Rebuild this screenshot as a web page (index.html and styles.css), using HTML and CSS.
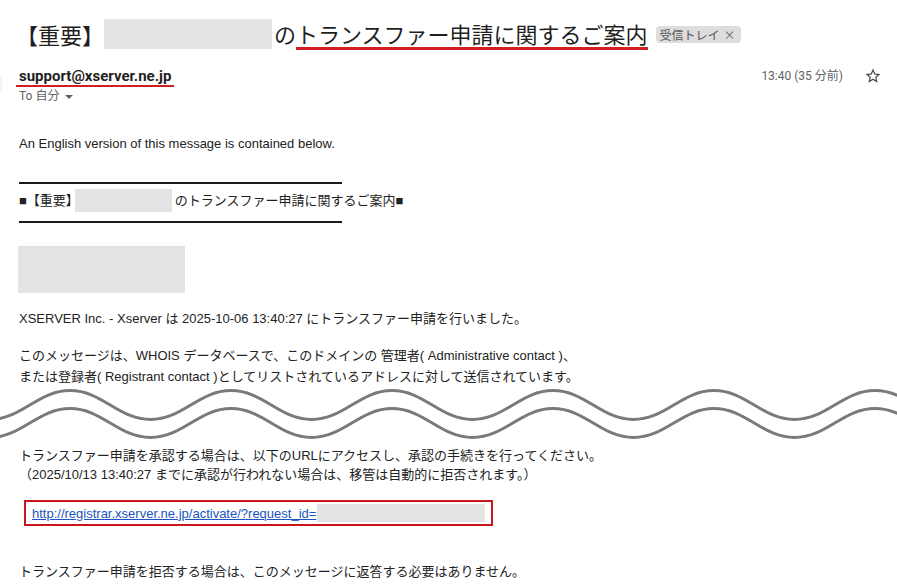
FILE: index.html
```html
<!DOCTYPE html>
<html lang="ja">
<head>
<meta charset="utf-8">
<title>トランスファー申請に関するご案内</title>
<link rel="stylesheet" href="styles.css">
</head>
<body>
<div class="page">
  <h1 class="subject">
    <span class="subj-head">【重要】</span><span class="redact redact-subject"></span><span class="subj-rest">の<span class="mark">トランスファー申請に関するご案内</span></span>
    <span class="chip">受信トレイ<span class="chip-x">×</span></span>
  </h1>

  <div class="meta">
    <div class="avatar"></div>
    <div class="from">
      <div class="sender"><span class="sender-mark">support@xserver.ne.jp</span></div>
      <div class="to">To 自分 <span class="caret"></span></div>
    </div>
    <div class="when">13:40 (35 分前)</div>
    <svg class="star" viewBox="0 0 24 24" width="18" height="18" aria-hidden="true">
      <path fill="#444746" d="M22 9.24l-7.19-.62L12 2 9.19 8.63 2 9.24l5.46 4.73L5.82 21 12 17.27 18.18 21l-1.63-7.03L22 9.24zM12 15.4l-3.76 2.27 1-4.28-3.32-2.88 4.38-.38L12 6.1l1.710 4.04 4.38.38-3.32 2.88 1 4.28L12 15.4z"/>
    </svg>
  </div>

  <div class="body">
    <p class="en">An English version of this message is contained below.</p>
    <div class="rule rule-top"></div>
    <p class="banner">■【重要】<span class="redact redact-inline"></span>のトランスファー申請に関するご案内■</p>
    <div class="rule rule-bottom"></div>
    <div class="redact redact-block"></div>

    <p class="line-x">XSERVER Inc. - Xserver は 2025-10-06 13:40:27 にトランスファー申請を行いました。</p>

    <p class="para">このメッセージは、WHOIS データベースで、このドメインの 管理者( Administrative contact )、<br>または登録者( Registrant contact )としてリストされているアドレスに対して送信されています。</p>

    <svg class="wave" width="897" height="56" viewBox="0 0 897 56" aria-hidden="true">
      <defs>
        <path id="wv" fill="none" stroke="#7a7a7a" stroke-width="3" d="M -91 3.5 C -58.8 3.5 -42.7 32.5 -10.5 32.5 S 37.8 3.5 70 3.5 S 118.3 32.5 150.5 32.5 S 198.8 3.5 231 3.5 S 279.3 32.5 311.5 32.5 S 359.8 3.5 392 3.5 S 440.3 32.5 472.5 32.5 S 520.8 3.5 553 3.5 S 601.3 32.5 633.5 32.5 S 681.8 3.5 714 3.5 S 762.3 32.5 794.5 32.5 S 842.8 3.5 875 3.5 S 923.3 32.5 955.5 32.5"/>
      </defs>
      <use href="#wv"/>
      <use href="#wv" transform="translate(0,18)"/>
    </svg>

    <p class="approve">トランスファー申請を承認する場合は、以下のURLにアクセスし、承認の手続きを行ってください。<br>（2025/10/13 13:40:27 までに承認が行われない場合は、移管は自動的に拒否されます。）</p>

    <div class="linkbox">
      <a class="link" href="#">http://registrar.xserver.ne.jp/activate/?request_id=</a><span class="redact redact-link"></span>
    </div>

    <p class="last">トランスファー申請を拒否する場合は、このメッセージに返答する必要はありません。</p>
  </div>
</div>
</body>
</html>
```

FILE: styles.css
```css
html, body {
  margin: 0;
  padding: 0;
  background: #ffffff;
}

.page {
  width: 897px;
  height: 585px;
  overflow: hidden;
}

.redact {
  background: #e3e3e3;
}

/* Subject */
.subject {
  display: flex;
  align-items: center;
  margin: 0;
  padding: 19px 0 0 16px;
  height: 30px;
  font: 400 22px/30px "Noto Sans CJK JP", "Noto Sans", sans-serif;
  color: #1f1f1f;
}

.redact-subject {
  display: inline-block;
  width: 168px;
  height: 30px;
}

.subj-rest {
  margin-left: 2px;
  white-space: nowrap;
}

.mark {
  display: inline-block;
  line-height: 27px;
  border-bottom: 3px solid #d01f22;
}

.chip {
  margin-left: 8px;
  display: inline-flex;
  align-items: center;
  height: 17px;
  padding: 0 5px 0 4px;
  background: #dddddd;
  border-radius: 4px;
  font: 400 12px/17px "Noto Sans CJK JP", sans-serif;
  color: #555555;
}

.chip-x {
  margin-left: 4px;
  font-size: 12px;
  color: #666666;
}

/* Meta row */
.meta {
  display: flex;
  align-items: flex-start;
  margin-top: 17px;
  padding-right: 15px;
}

.avatar {
  flex: none;
  width: 34px;
  height: 34px;
  margin-left: -34px;
  border: 1px solid #ececec;
  border-radius: 50%;
  background: #fafafa;
}

.from {
  margin-left: 17px;
}

.sender {
  font: 700 15px/20px Roboto, "Liberation Sans", sans-serif;
  color: #1f1f1f;
}

.sender-mark {
  padding: 0 3px;
  margin-left: -3px;
  border-bottom: 2px solid #d01f22;
}

.to {
  margin-top: 2px;
  font: 400 12px/16px Roboto, "Noto Sans CJK JP", sans-serif;
  color: #5f6368;
}

.caret {
  display: inline-block;
  margin-left: 3px;
  vertical-align: middle;
  border-left: 4px solid transparent;
  border-right: 4px solid transparent;
  border-top: 4px solid #5f6368;
}

.when {
  margin-left: auto;
  font: 400 12px/20px Roboto, "Noto Sans CJK JP", sans-serif;
  color: #5f6368;
}

.star {
  flex: none;
  margin-left: 21px;
  margin-top: 1px;
}

/* Body */
.body {
  padding-left: 19px;
  font: 400 13px/19px "Liberation Sans", "Noto Sans CJK JP", sans-serif;
  color: #222222;
}

.body p {
  margin: 0;
  white-space: nowrap;
}

.en {
  margin-top: 30px !important;
}

.rule {
  width: 323px;
  height: 2px;
  background: #1a1a1a;
}

.rule-top {
  margin-top: 29px;
}

.banner {
  margin-top: 5px !important;
  line-height: 23px;
}

.redact-inline {
  display: inline-block;
  width: 97px;
  height: 23px;
  vertical-align: top;
  margin: 0 3px 0 -4px;
}

.rule-bottom {
  margin-top: 9px;
}

.redact-block {
  width: 167px;
  height: 47px;
  margin-top: 23px;
  margin-left: -1px;
}

.line-x {
  margin-top: 16px !important;
}

.para {
  margin-top: 17px !important;
  line-height: 21px;
}

.wave {
  display: block;
  margin-left: -19px;
}

.approve {
  margin-top: 3px !important;
}

.linkbox {
  display: flex;
  align-items: center;
  box-sizing: border-box;
  width: 469px;
  height: 26px;
  margin-top: 16px;
  margin-left: 5px;
  padding-left: 6px;
  border: 2px solid #c8161d;
}

.link {
  color: #1a55c0;
  text-decoration: underline;
}

.redact-link {
  display: inline-block;
  width: 168px;
  height: 18px;
  margin-left: 1px;
}

.last {
  margin-top: 36px !important;
}
```
